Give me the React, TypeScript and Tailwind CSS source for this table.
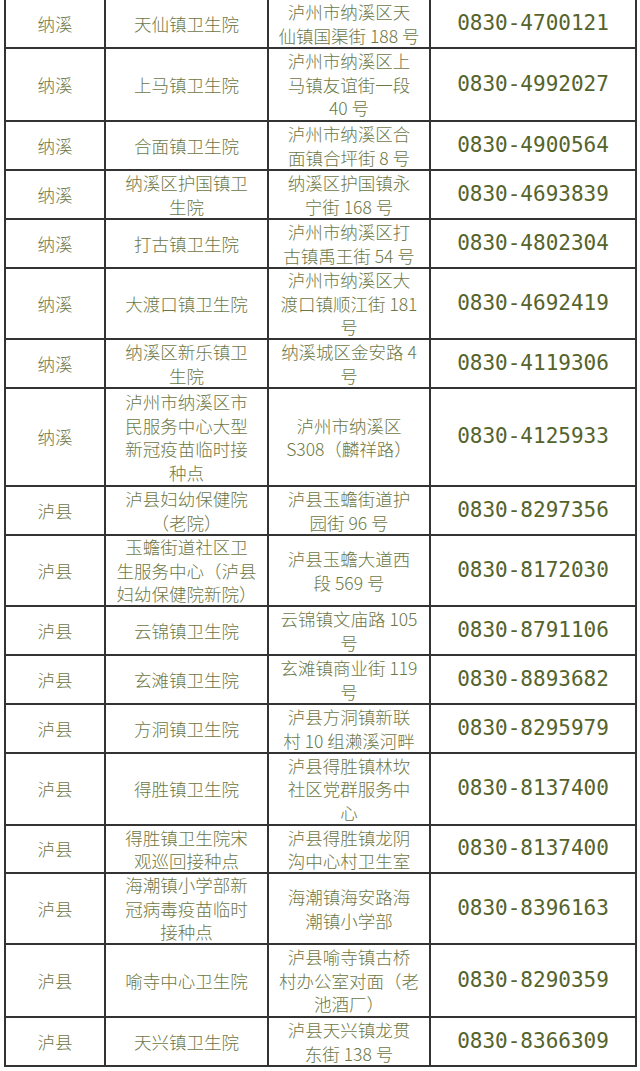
const rows: { h: string; area: string; name: string[]; addr: string[]; tel: string }[] = [
  { h: 'h-[49px]', area: '纳溪', name: ['天仙镇卫生院'], addr: ['泸州市纳溪区天', '仙镇国渠街 188 号'], tel: '0830-4700121' },
  { h: 'h-[73px]', area: '纳溪', name: ['上马镇卫生院'], addr: ['泸州市纳溪区上', '马镇友谊街一段', '40 号'], tel: '0830-4992027' },
  { h: 'h-[49px]', area: '纳溪', name: ['合面镇卫生院'], addr: ['泸州市纳溪区合', '面镇合坪街 8 号'], tel: '0830-4900564' },
  { h: 'h-[49px]', area: '纳溪', name: ['纳溪区护国镇卫', '生院'], addr: ['纳溪区护国镇永', '宁街 168 号'], tel: '0830-4693839' },
  { h: 'h-[49px]', area: '纳溪', name: ['打古镇卫生院'], addr: ['泸州市纳溪区打', '古镇禹王街 54 号'], tel: '0830-4802304' },
  { h: 'h-[71px]', area: '纳溪', name: ['大渡口镇卫生院'], addr: ['泸州市纳溪区大', '渡口镇顺江街 181', '号'], tel: '0830-4692419' },
  { h: 'h-[49px]', area: '纳溪', name: ['纳溪区新乐镇卫', '生院'], addr: ['纳溪城区金安路 4', '号'], tel: '0830-4119306' },
  { h: 'h-[98px]', area: '纳溪', name: ['泸州市纳溪区市', '民服务中心大型', '新冠疫苗临时接', '种点'], addr: ['泸州市纳溪区', 'S308（麟祥路）'], tel: '0830-4125933' },
  { h: 'h-[49px]', area: '泸县', name: ['泸县妇幼保健院', '（老院）'], addr: ['泸县玉蟾街道护', '园街 96 号'], tel: '0830-8297356' },
  { h: 'h-[71px]', area: '泸县', name: ['玉蟾街道社区卫', '生服务中心（泸县', '妇幼保健院新院）'], addr: ['泸县玉蟾大道西', '段 569 号'], tel: '0830-8172030' },
  { h: 'h-[49px]', area: '泸县', name: ['云锦镇卫生院'], addr: ['云锦镇文庙路 105', '号'], tel: '0830-8791106' },
  { h: 'h-[49px]', area: '泸县', name: ['玄滩镇卫生院'], addr: ['玄滩镇商业街 119', '号'], tel: '0830-8893682' },
  { h: 'h-[49px]', area: '泸县', name: ['方洞镇卫生院'], addr: ['泸县方洞镇新联', '村 10 组濑溪河畔'], tel: '0830-8295979' },
  { h: 'h-[72px]', area: '泸县', name: ['得胜镇卫生院'], addr: ['泸县得胜镇林坎', '社区党群服务中', '心'], tel: '0830-8137400' },
  { h: 'h-[48px]', area: '泸县', name: ['得胜镇卫生院宋', '观巡回接种点'], addr: ['泸县得胜镇龙阴', '沟中心村卫生室'], tel: '0830-8137400' },
  { h: 'h-[71px]', area: '泸县', name: ['海潮镇小学部新', '冠病毒疫苗临时', '接种点'], addr: ['海潮镇海安路海', '潮镇小学部'], tel: '0830-8396163' },
  { h: 'h-[73px]', area: '泸县', name: ['喻寺中心卫生院'], addr: ['泸县喻寺镇古桥', '村办公室对面（老', '池酒厂）'], tel: '0830-8290359' },
  { h: 'h-[49px]', area: '泸县', name: ['天兴镇卫生院'], addr: ['泸县天兴镇龙贯', '东街 138 号'], tel: '0830-8366309' },
]

function Lines({ lines }: { lines: string[] }) {
  return (
    <div className="text-center">
      {lines.map((l, i) => (
        <div key={i} className="whitespace-nowrap">{l}</div>
      ))}
    </div>
  )
}

export default function App() {
  return (
    <div className="w-[640px] min-h-[1071px] bg-white pl-[4px]">
      <div
        className="w-[633px] border-l-2 border-[#333] text-[17.5px] leading-[23.5px] text-[#6c7746]"
        style={{ fontFamily: '"Noto Sans CJK SC", "Noto Sans", sans-serif' }}
      >
        {rows.map((r, i) => (
          <div key={i} className={`flex border-b-2 border-[#333] ${r.h}`}>
            <div className="w-[100px] shrink-0 border-r-2 border-[#333] flex items-center justify-center font-light">
              {r.area}
            </div>
            <div className="w-[163px] shrink-0 border-r-2 border-[#333] flex items-center justify-center font-light">
              <Lines lines={r.name} />
            </div>
            <div className="w-[162px] shrink-0 border-r-2 border-[#333] flex items-center justify-center font-light">
              <Lines lines={r.addr} />
            </div>
            <div
              className="w-[206px] shrink-0 border-r-2 border-[#333] flex items-center justify-center text-[21px] text-[#55632c]"
              style={{ fontFamily: '"DejaVu Sans Mono", monospace' }}
            >
              {r.tel}
            </div>
          </div>
        ))}
      </div>
    </div>
  )
}
